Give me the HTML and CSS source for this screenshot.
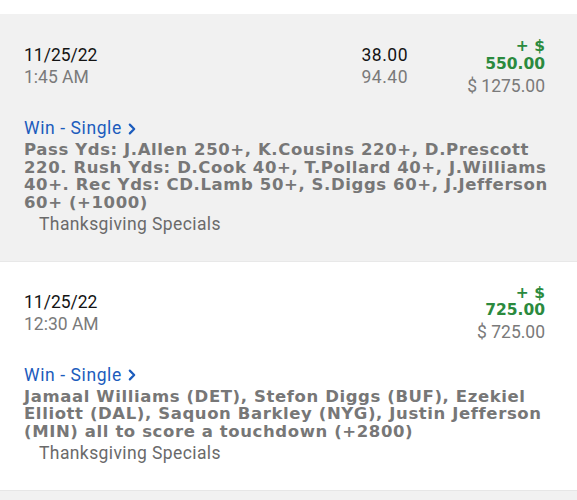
FILE: index.html
```html
<!DOCTYPE html>
<html>
<head>
<meta charset="utf-8">
<link rel="stylesheet" href="styles.css">
</head>
<body>
<div class="list">
  <div class="bet bet-grey">
    <div class="top">
      <div class="when">
        <div class="date">11/25/22</div>
        <div class="time">1:45 AM</div>
      </div>
      <div class="odds">
        <div class="odds-main">38.00</div>
        <div class="odds-sub">94.40</div>
      </div>
      <div class="money">
        <div class="win">+ $<br>550.00</div>
        <div class="stake">$ 1275.00</div>
      </div>
    </div>
    <div class="type">Win - Single<svg class="chev" viewBox="0 0 8 12" width="8" height="12"><path d="M1.8 1.6 L6.2 6 L1.8 10.4" fill="none" stroke="currentColor" stroke-width="2.2" stroke-linecap="round" stroke-linejoin="round"/></svg></div>
    <div class="desc">Pass Yds: J.Allen 250+, K.Cousins 220+, D.Prescott 220. Rush Yds: D.Cook 40+, T.Pollard 40+, J.Williams 40+. Rec Yds: CD.Lamb 50+, S.Diggs 60+, J.Jefferson 60+ (+1000)</div>
    <div class="event">Thanksgiving Specials</div>
  </div>
  <div class="bet bet-white">
    <div class="top">
      <div class="when">
        <div class="date">11/25/22</div>
        <div class="time">12:30 AM</div>
      </div>
      <div class="money">
        <div class="win">+ $<br>725.00</div>
        <div class="stake">$ 725.00</div>
      </div>
    </div>
    <div class="type">Win - Single<svg class="chev" viewBox="0 0 8 12" width="8" height="12"><path d="M1.8 1.6 L6.2 6 L1.8 10.4" fill="none" stroke="currentColor" stroke-width="2.2" stroke-linecap="round" stroke-linejoin="round"/></svg></div>
    <div class="desc">Jamaal Williams (DET), Stefon Diggs (BUF), Ezekiel Elliott (DAL), Saquon Barkley (NYG), Justin Jefferson (MIN) all to score a touchdown (+2800)</div>
    <div class="event">Thanksgiving Specials</div>
  </div>
  <div class="bet-rest"></div>
</div>
</body>
</html>
```
FILE: styles.css
```css
html, body {
  margin: 0;
  padding: 0;
  background: #ffffff;
  font-family: Roboto, "Liberation Sans", sans-serif;
}
.list {
  padding-top: 14px;
}
.bet {
  padding: 24px 16px 26px 24px;
}
.bet-grey {
  background: #f1f1f1;
}
.bet-white {
  background: #ffffff;
  border-top: 1px solid #e8e8e8;
  padding-top: 23px;
}
.bet-rest {
  background: #f1f1f1;
  border-top: 1px solid #e6e6e6;
  height: 20px;
}
.top {
  display: flex;
  align-items: flex-start;
  margin-right: 16px;
}
.when {
  flex: 1;
  margin-top: 6px;
  font-size: 17.5px;
  line-height: 22px;
}
.date {
  color: #141414;
}
.time {
  color: #7a7a7a;
}
.odds {
  margin-top: 6px;
  text-align: right;
  font-size: 17.5px;
  line-height: 22px;
  letter-spacing: 0.5px;
}
.odds-main {
  color: #141414;
}
.odds-sub {
  color: #7a7a7a;
}
.money {
  width: 137px;
  text-align: right;
}
.win {
  color: #2b8a3e;
  font-family: "DejaVu Sans", sans-serif;
  font-weight: 700;
  font-size: 15.5px;
  line-height: 17.5px;
}
.stake {
  margin-top: 1.5px;
  color: #7a7a7a;
  font-size: 17.5px;
  line-height: 22px;
}
.type {
  margin-top: 20.5px;
  color: #1c5cbd;
  font-size: 17.5px;
  line-height: 22px;
  letter-spacing: 0.6px;
}
.chev {
  display: inline-block;
  margin-left: 6px;
  vertical-align: -0.5px;
}
.desc {
  margin-top: 2px;
  color: #777777;
  font-family: "DejaVu Sans", sans-serif;
  font-weight: 700;
  font-size: 16.5px;
  line-height: 17.5px;
  letter-spacing: 0.6px;
}
.event {
  margin-top: 1.5px;
  padding-left: 15px;
  color: #6a6a6a;
  font-size: 17.5px;
  line-height: 22px;
  letter-spacing: 0.4px;
}
```
